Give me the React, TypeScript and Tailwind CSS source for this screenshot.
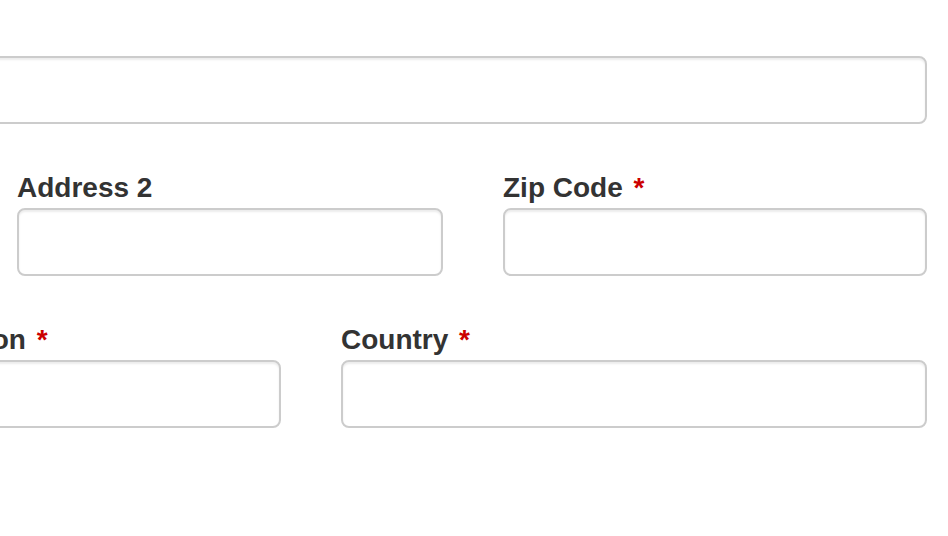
import React from "react";

function Field({ label, required }: { label?: string; required?: boolean }) {
  return (
    <div className="flex flex-col">
      {label && (
        <label className="h-[40px] leading-[40px] text-[28px] font-bold text-[#333] whitespace-nowrap">
          {label}
          {required && <span className="ml-[3px] text-[#c00]"> *</span>}
        </label>
      )}
      <input
        type="text"
        className="h-[68px] w-full rounded-[8px] border-2 border-[#ccc] bg-white shadow-[inset_0_2px_2px_rgba(0,0,0,0.075)] outline-none"
      />
    </div>
  );
}

export default function App() {
  return (
    <div
      className="w-[948px] h-[536px] overflow-hidden bg-white"
      style={{ fontFamily: '"Liberation Sans", Arial, sans-serif' }}
    >
      <div className="pt-[56px] pl-[17px] pr-[21px] flex flex-col gap-[44px]">
        {/* full-width field, label is above the visible area */}
        <div className="-ml-[60px]">
          <Field />
        </div>

        <div className="grid grid-cols-[426px_1fr] gap-x-[60px]">
          <Field label="Address 2" />
          <Field label="Zip Code" required />
        </div>

        <div className="flex gap-x-[60px]">
          <div className="w-[350px] shrink-0 -ml-[86px]">
            <Field label="Region" required />
          </div>
          <div className="flex-1">
            <Field label="Country" required />
          </div>
        </div>
      </div>
    </div>
  );
}
